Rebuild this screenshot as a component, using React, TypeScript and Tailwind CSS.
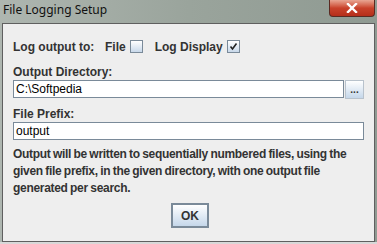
import React from "react";

function CheckBox({ checked }: { checked?: boolean }) {
  return (
    <div className="w-[13px] h-[13px] border border-[#7a8a99] bg-gradient-to-b from-[#ffffff] to-[#c8d8ea] flex items-center justify-center">
      {checked && (
        <svg width="9" height="9" viewBox="0 0 9 9">
          <path d="M1.5 4.5 L3.5 7 L7.5 1.5" stroke="#222" strokeWidth="1.6" fill="none" />
        </svg>
      )}
    </div>
  );
}

export default function App() {
  const font = { fontFamily: '"Liberation Sans", Arial, sans-serif' };
  return (
    <div
      className="w-[377px] h-[244px] overflow-hidden flex flex-col bg-gradient-to-r from-[#aeb6b0] via-[#9aa49c] to-[#8f9a92]"
    >
      <div className="h-[23px] flex items-start justify-between pl-[3px] pr-[2px]">
        <div
          className="text-[12px] leading-[20px] text-[#111]"
          style={{ fontFamily: '"Noto Sans", "Open Sans", sans-serif' }}
        >
          File Logging Setup
        </div>
        <div className="w-[46px] h-[17px] rounded-b-[4px] border border-t-0 border-[#5a2a22] bg-gradient-to-b from-[#e8a593] via-[#c9422b] to-[#b52e1a] flex items-center justify-center">
          <svg width="12" height="10" viewBox="0 0 12 10">
            <path d="M2 1 L10 9 M10 1 L2 9" stroke="#fff" strokeWidth="2.4" strokeLinecap="square" />
          </svg>
        </div>
      </div>
      <div
        className="mx-[2px] h-[219px] border border-[#5f5f5f] bg-[#eeeeee] pl-[10px] pr-[8px] text-[#333333] flex flex-col"
        style={font}
      >
        <div className="mt-[16px] h-[13px] flex items-center text-[12px] font-bold">
          <span className="w-[92px]">Log output to:</span>
          <span>File</span>
          <span className="ml-[4px]">
            <CheckBox />
          </span>
          <span className="ml-[12px]">Log Display</span>
          <span className="ml-[4px]">
            <CheckBox checked />
          </span>
        </div>
        <div className="mt-[12px] text-[12px] leading-[14px] font-bold">Output Directory:</div>
        <div className="mt-[1px] flex">
          <div className="w-[331px] h-[18px] border border-[#7a8a99] bg-white text-[12px] leading-[16px] text-black pl-[2px]">
            C:\Softpedia
          </div>
          <div className="ml-[1px] w-[19px] h-[19px] border border-[#b8c2cc] bg-gradient-to-b from-[#ffffff] to-[#c5d7ea] flex items-end justify-center pb-[3px] text-[10px] leading-[10px] font-bold text-[#333]">
            ...
          </div>
        </div>
        <div className="mt-[8px] text-[12px] leading-[14px] font-bold">File Prefix:</div>
        <div className="mt-[1px] w-[351px] h-[18px] border border-[#7a8a99] bg-white text-[12px] leading-[16px] text-black pl-[2px]">
          output
        </div>
        <div className="mt-[6px] text-[12px] leading-[17px] font-bold whitespace-nowrap tracking-[-0.3px] [word-spacing:-0.6px]">
          Output will be written to sequentially numbered files, using the
          <br />
          given file prefix, in the given directory, with one output file
          <br />
          generated per search.
        </div>
        <div className="mt-[6px] flex justify-center">
          <div className="ml-[1px] w-[38px] h-[25px] border-2 border-[#7a8a99] bg-gradient-to-b from-[#ffffff] to-[#c5d7ea] flex items-center justify-center text-[12px] font-bold text-[#333]">
            OK
          </div>
        </div>
      </div>
      <div className="flex-1 bg-[#d8d8d8]" />
    </div>
  );
}
